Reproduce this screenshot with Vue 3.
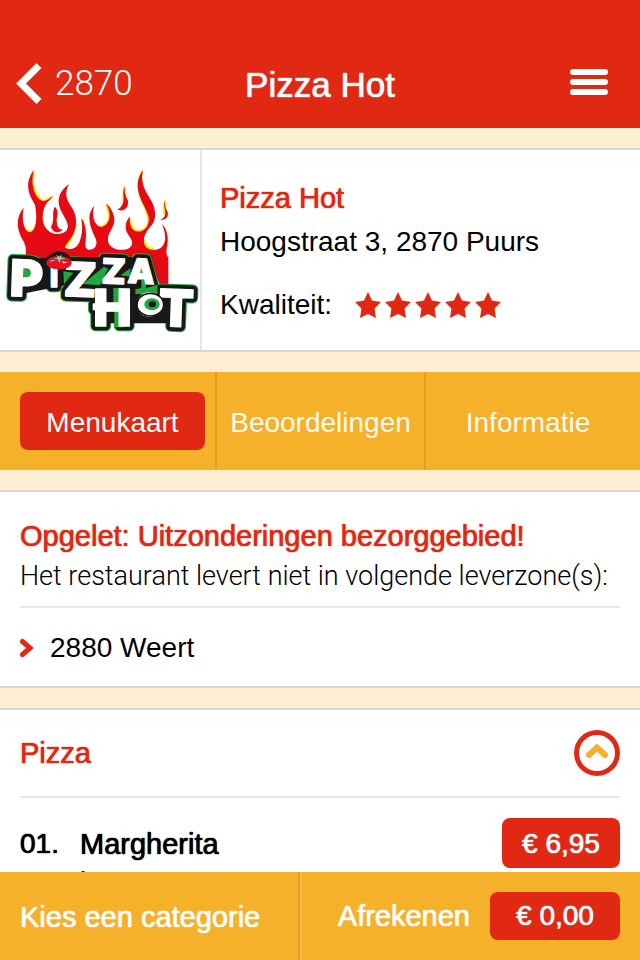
<script setup>
import { ref } from 'vue'

const tabs = ['Menukaart', 'Beoordelingen', 'Informatie']
const activeTab = ref('Menukaart')
const open = ref(true)
const zones = ['2880 Weert']
const dishes = [{ nr: '01.', name: 'Margherita', info: 'kaas', price: '€ 6,95' }]

const letters = [
  { c: 'P', x: 28, y: 408, s: 152, r: 2 },
  { c: 'I', x: 150, y: 380, s: 84, r: 0 },
  { c: 'Z', x: 190, y: 408, s: 142, r: 2 },
  { c: 'Z', x: 304, y: 370, s: 104, r: 2 },
  { c: 'A', x: 382, y: 368, s: 102, r: 3 },
  { c: 'H', x: 280, y: 498, s: 154, r: 0 },
  { c: 'T', x: 474, y: 498, s: 154, r: 2 },
  { c: 'O', x: 411, y: 468, s: 94, r: 0 },
]
const layers = ['edge', 'outline', 'face']
</script>

<template>
  <div class="app">
    <header class="bar">
      <button class="back" type="button">
        <svg width="26" height="42" viewBox="0 0 26 42" aria-hidden="true">
          <path d="M23 2.500 L5 20.500 L23 38.500" fill="none" stroke="#fff" stroke-width="7" />
        </svg>
        <span>2870</span>
      </button>
      <h1 class="title">Pizza Hot</h1>
      <button class="menu" type="button" aria-label="Menu">
        <span></span><span></span><span></span>
      </button>
    </header>

    <main class="content">
      <section class="card shop">
        <div class="logo">
          <svg viewBox="0 0 600 600" role="img" aria-label="Pizza Hot logo">
            <g transform="translate(0 30)">
              <g fill="none" stroke="#ffe800" stroke-width="9">
                <path d="M101 34 C91 70 98 100 130 127 L156 110" />
                <path d="M66 195 Q72 215 92 216 Q104 213 108 200" />
                <path d="M126 160 Q120 190 140 214 M226 190 Q224 220 196 260" />
                <path d="M246 180 Q258 205 252 262 M272 160 Q270 180 284 192 M300 202 Q330 198 330 166 L320 136" />
                <path d="M427 34 C408 75 418 105 438 145 Q452 180 442 200 Q430 216 408 213 Q390 205 389 178" />
                <path d="M430 240 Q436 266 462 269" />
                <path d="M375 84 Q368 110 374 132 M497 126 Q490 145 496 165" />
              </g>
              <g fill="#e60a14">
                <path d="M75 296 C80 270 78 255 68 240 C48 205 48 170 71 143 C64 180 72 216 90 217 C108 214 113 175 105 135 C92 110 68 78 101 30 C93 65 98 98 118 118 C132 130 145 118 162 105 C146 122 136 132 131 150 C123 180 130 202 150 216 C166 226 188 224 200 211 C215 188 178 160 176 128 C175 103 189 85 207 72 C190 105 203 124 217 145 C237 178 227 215 211 237 C200 252 195 258 195 263 C215 273 230 264 238 247 C248 220 248 198 244 174 C256 190 260 214 257 240 C255 258 255 265 266 269 C285 270 294 255 287 236 C275 210 254 170 283 137 C275 165 280 195 303 201 C330 196 337 160 317 130 C336 144 348 172 341 193 C333 215 318 230 326 250 C337 273 378 275 392 260 C405 242 385 230 379 213 C373 192 381 178 391 169 C386 188 393 208 408 214 C434 220 450 193 446 172 C440 145 416 118 413 82 C412 60 420 43 429 29 C420 65 435 92 449 114 C469 145 471 175 455 196 C436 216 425 240 436 259 C449 276 480 273 490 255 C500 235 495 215 486 192 C501 206 507 232 501 262 Q496 285 505 292 L505 375 H480 L450 300 Z" />
                <path d="M164 140 C154 160 166 180 153 200 C160 222 180 220 189 208 C174 210 170 196 170 177 C176 160 173 147 164 140 Z" />
                <path d="M375 77 C363 98 378 115 366 136 Q362 145 352 148 C370 160 388 140 384 123 C377 104 371 96 375 77 Z" />
                <path d="M495 120 C488 140 502 158 492 172 Q488 178 480 178 C493 184 507 172 503 157 C497 145 494 136 495 120 Z" />
              </g>
              <template v-for="layer in layers" :key="layer">
                <g v-if="layer === 'face'">
                  <path d="M44 300 L160 292 L445 292 L470 378 H560 L535 490 H300 V415 H200 V375 L75 400 Z" fill="#181818" />
                  <g fill="#20a83c">
                    <path d="M68 326 L104 330 Q116 340 103 350 L66 354 Z" />
                    <path d="M190 334 L220 338 L192 372 Z M248 372 L312 320 L324 326 L300 376 Z" />
                    <path d="M362 346 L392 324 L390 350 Z M412 344 L430 318 L438 344 Z" />
                    <path d="M340 384 H372 V432 H340 Z M343 448 H370 V502 H343 Z" />
                    <path d="M406 388 L424 384 V360 H438 V384 L472 374 V402 H406 Z" />
                  </g>
                </g>
                <g :class="['letters', layer]">
                  <path d="M280 432 H300 V449 H280 Z" />
                  <text
                    v-for="(l, i) in letters"
                    :key="i"
                    :x="l.x"
                    :y="l.y"
                    :font-size="l.s"
                    :transform="`rotate(${l.r} ${l.x} ${l.y})`"
                  >{{ l.c }}</text>
                </g>
              </template>
              <ellipse cx="451" cy="434" rx="40" ry="34" fill="#fff" stroke="#181818" stroke-width="5" />
              <ellipse cx="456" cy="433" rx="23" ry="18" fill="#20a83c" />
              <ellipse cx="457" cy="433" rx="11" ry="9" fill="#181818" />
              <path d="M143 296 Q174 264 208 292" fill="#181818" stroke="#181818" stroke-width="8" />
              <ellipse cx="177" cy="308" rx="38" ry="20" fill="#e8101c" />
              <path d="M148 308 Q150 298 166 300 Q150 304 148 308 Z M186 304 L203 308 L190 310 Z" fill="#fff" />
              <path d="M168 284 L180 290 L184 282 L184 292 L198 297 L182 298 L178 310 L174 298 L160 296 L174 292 Z" fill="#7fd6a8" />
            </g>
          </svg>
        </div>
        <div class="details">
          <h2 class="heading">Pizza Hot</h2>
          <p class="address">Hoogstraat 3, 2870 Puurs</p>
          <div class="quality">
            <span>Kwaliteit:</span>
            <span class="stars" role="img" aria-label="5 sterren">
              <svg v-for="n in 5" :key="n" width="26" height="26" viewBox="0 0 26 26">
                <path d="M13 0 L17 8.500 L26 10 L19.600 16.600 L21 26 L13 22 L5 26 L6.400 16.600 L0 10 L9 8.500 Z" fill="#e12813" />
              </svg>
            </span>
          </div>
        </div>
      </section>

      <nav class="tabs">
        <div v-for="t in tabs" :key="t" class="tab">
          <button type="button" :class="{ active: t === activeTab }" @click="activeTab = t">{{ t }}</button>
        </div>
      </nav>

      <section class="card notice">
        <h2 class="heading">Opgelet: Uitzonderingen bezorggebied!</h2>
        <p class="light">Het restaurant levert niet in volgende leverzone(s):</p>
        <ul class="zones">
          <li v-for="z in zones" :key="z">
            <svg width="14" height="20" viewBox="0 0 14 20" aria-hidden="true">
              <path d="M2.500 3.500 L10 10 L2.500 16.500" fill="none" stroke="#e12813" stroke-width="5" stroke-linecap="round" />
            </svg>
            <span>{{ z }}</span>
          </li>
        </ul>
      </section>

      <section class="card category">
        <div class="category-head">
          <h2 class="heading">Pizza</h2>
          <button class="toggle" type="button" aria-label="Pizza in- of uitklappen" :aria-expanded="open" @click="open = !open">
            <svg width="46" height="46" viewBox="0 0 46 46" aria-hidden="true">
              <circle cx="23" cy="23" r="20.500" fill="#fff" stroke="#e12813" stroke-width="5" />
              <path d="M15 25 L23 17.500 L31 25" fill="none" stroke="#f6b12a" stroke-width="6" stroke-linecap="round" />
            </svg>
          </button>
        </div>
        <template v-if="open">
          <article v-for="d in dishes" :key="d.nr" class="dish">
            <span class="nr">{{ d.nr }}</span>
            <div class="dish-text">
              <h3>{{ d.name }}</h3>
              <p>{{ d.info }}</p>
            </div>
            <button class="price" type="button">{{ d.price }}</button>
          </article>
        </template>
      </section>
    </main>

    <footer class="bottom">
      <button class="choose" type="button">Kies een categorie</button>
      <button class="checkout" type="button">
        <span>Afrekenen</span>
        <span class="total">€ 0,00</span>
      </button>
    </footer>
  </div>
</template>

<style>
body {
  margin: 0;
  background: #ffefd2;
}
</style>

<style scoped>
.app {
  --medium: 0 0 1px currentColor, 0 0 1px currentColor;
  display: flex;
  flex-direction: column;
  height: 100vh;
  font-family: "Liberation Sans", Arial, sans-serif;
  font-size: 28px;
  line-height: 32px;
  color: #000;
}
h1, h2, h3, p, ul {
  margin: 0;
  padding: 0;
  font-weight: 400;
}
button {
  margin: 0;
  padding: 0;
  border: 0;
  background: none;
  font: inherit;
  color: inherit;
  cursor: pointer;
}
svg {
  display: block;
}
.bar {
  flex: none;
  display: grid;
  grid-template-columns: 1fr auto 1fr;
  align-items: center;
  box-sizing: border-box;
  height: 128px;
  padding: 40px 32px 0 16px;
  background: #e12813;
  color: #fff;
}
.back {
  display: flex;
  align-items: center;
  gap: 13px;
  font-family: Roboto, sans-serif;
  font-weight: 300;
  font-size: 35px;
}
.title {
  padding: 2px 0 0 16px;
  font-size: 35px;
  line-height: 40px;
  text-shadow: var(--medium);
}
.menu {
  justify-self: end;
  display: grid;
  gap: 4px;
  width: 38px;
  padding-bottom: 4px;
}
.menu span {
  height: 6px;
  border-radius: 3px;
  background: #fff;
}
.content {
  flex: 1;
  min-height: 0;
  display: flex;
  flex-direction: column;
  gap: 20px;
  padding-top: 20px;
  overflow-y: auto;
  scrollbar-width: none;
}
.card {
  flex: none;
  border-top: 2px solid #d8d6d6;
  border-bottom: 2px solid #d8d6d6;
  background: #fff;
}
.heading {
  font-size: 29px;
  color: #e12813;
  text-shadow: var(--medium);
}
.shop {
  display: flex;
}
.logo {
  width: 200px;
  height: 200px;
  border-right: 2px solid #e6e6e6;
}
.letters {
  font-family: Inter, sans-serif;
  font-weight: 900;
  stroke-linejoin: round;
}
.edge {
  fill: #20a83c;
  stroke: #20a83c;
  stroke-width: 32px;
}
.outline {
  fill: #181818;
  stroke: #181818;
  stroke-width: 26px;
}
.face {
  fill: #fff;
  stroke: #fff;
  stroke-width: 4px;
}
.details {
  flex: 1;
  padding: 32px 18px 0;
}
.address {
  margin-top: 12px;
}
.quality {
  display: flex;
  align-items: center;
  gap: 23px;
  margin-top: 31px;
}
.stars {
  display: flex;
  gap: 4px;
}
.tabs {
  flex: none;
  display: grid;
  grid-template-columns: 207fr 209fr 204fr;
  padding: 0 10px;
  background: #f6b12a;
  color: #fffaf0;
}
.tab {
  padding: 20px 10px;
  border-right: 2px solid #e79d1d;
}
.tab:last-child {
  border-right: 0;
}
.tab button {
  width: 100%;
  height: 58px;
  padding-top: 4px;
  border-radius: 8px;
}
.tab .active {
  background: #e12813;
  color: #fff;
}
.notice {
  padding: 28px 20px 22px;
}
.light {
  padding: 8px 0 14px;
  border-bottom: 2px solid #e6e6e6;
  font-family: Roboto, sans-serif;
  font-size: 27px;
  font-weight: 300;
}
.zones {
  list-style: none;
}
.zones li {
  display: flex;
  align-items: center;
  gap: 16px;
  padding-top: 24px;
}
.category {
  padding: 0 20px;
}
.category-head {
  display: flex;
  align-items: center;
  justify-content: space-between;
  padding: 20px 0;
  border-bottom: 2px solid #e6e6e6;
}
.dish {
  display: flex;
  align-items: flex-start;
  padding: 20px 0;
}
.nr {
  width: 60px;
  padding-top: 10px;
  text-shadow: var(--medium);
}
.dish-text {
  flex: 1;
  padding-top: 10px;
}
.dish-text h3 {
  margin-bottom: 6px;
  font-size: 29px;
  text-shadow: var(--medium);
}
.price,
.total {
  border-radius: 8px;
  background: #e12813;
  color: #fff;
  text-align: center;
  text-shadow: var(--medium);
}
.price {
  width: 118px;
  height: 50px;
  padding-top: 2px;
}
.bottom {
  flex: none;
  display: flex;
  height: 88px;
  background: #f6b12a;
  color: #fff;
  font-size: 29px;
}
.choose {
  width: 300px;
  padding: 2px 0 0 20px;
  border-right: 2px solid #e79d1d;
  text-align: left;
  text-shadow: var(--medium);
}
.checkout {
  flex: 1;
  display: flex;
  align-items: center;
  justify-content: flex-end;
  gap: 20px;
  padding-right: 20px;
  border-left: 2px solid #f9bc45;
  text-shadow: var(--medium);
}
.total {
  width: 130px;
  font-size: 28px;
  line-height: 48px;
}
</style>
